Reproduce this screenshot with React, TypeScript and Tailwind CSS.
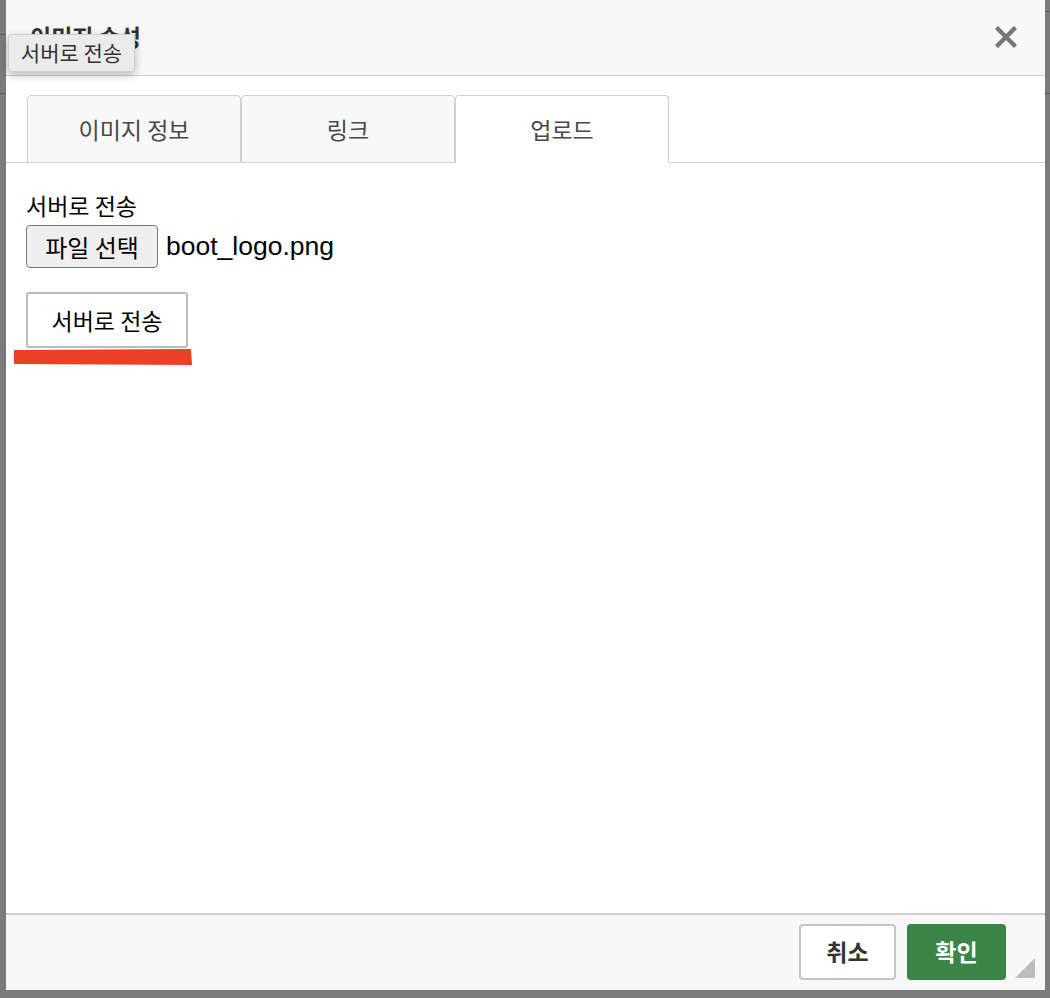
import React from "react";

const KR = { fontFamily: '"Noto Sans CJK KR", "Liberation Sans", sans-serif' };
const MIX = { fontFamily: '"Liberation Sans", "Noto Sans CJK KR", sans-serif' };

function Tab({ label, active }: { label: string; active?: boolean }) {
  return (
    <div
      className={
        "w-[214px] h-[68px] -mb-px flex items-center justify-center rounded-t-[4px] border border-[#d1d1d1] text-[23px] text-[#484848] " +
        (active ? "bg-white border-b-white" : "bg-[#f8f8f8]")
      }
    >
      {label}
    </div>
  );
}

export default function App() {
  return (
    <div className="relative w-[1050px] h-[998px] bg-[#7b7b7b] pl-[6px] pr-[5px] pb-[8px] flex" style={KR}>
      {/* background lines peeking at edges */}
      <div className="absolute left-0 top-[34px] w-[6px] h-px bg-[#5e5e5e]" />
      <div className="absolute left-0 top-[93px] w-[6px] h-px bg-[#5e5e5e]" />
      <div className="absolute right-0 top-[11px] w-[5px] h-px bg-[#5e5e5e]" />
      <div className="absolute right-0 top-[93px] w-[5px] h-px bg-[#5e5e5e]" />

      <div className="relative flex-1 flex flex-col bg-white">
        {/* header */}
        <div className="h-[76px] shrink-0 bg-[#f8f8f8] border-b border-[#d1d1d1] flex items-center justify-between pl-[24px] pr-[28px]">
          <div className="text-[23px] font-bold text-[#333] -mt-[2px]">이미지 속성</div>
          <svg width="22" height="22" viewBox="0 0 22 22" className="mt-[-1px]">
            <path d="M3 3 L19 19 M19 3 L3 19" stroke="#777" strokeWidth="4.4" strokeLinecap="square" />
          </svg>
        </div>

        {/* tabs */}
        <div className="pt-[19px] pl-[21px] flex border-b border-[#d1d1d1]">
          <Tab label="이미지 정보" />
          <Tab label="링크" />
          <Tab label="업로드" active />
        </div>

        {/* body */}
        <div className="flex-1 pl-[20px] pt-[28px]">
          <div className="text-[23px] leading-[28px] text-black">서버로 전송</div>
          <div className="mt-[6px] flex items-center">
            <div className="w-[132px] h-[43px] rounded-[4px] border border-[#767676] bg-[#efefef] flex items-center justify-center text-[24px] text-black">
              파일 선택
            </div>
            <div className="ml-[8px] text-[26.5px] text-black" style={MIX}>
              boot_logo.png
            </div>
          </div>
          <div className="mt-[24px] w-[162px] h-[56px] rounded-[3px] border-2 border-[#bcbcbc] bg-white flex items-center justify-center text-[23px] text-black">
            서버로 전송
          </div>
          <svg width="182" height="18" viewBox="0 0 182 18" className="-ml-[12px] mt-[1px]">
            <polygon points="0,1 177,0 178,16 0,15" fill="#ea4125" />
          </svg>
        </div>

        {/* footer */}
        <div className="h-[77px] shrink-0 bg-[#f8f8f8] border-t-2 border-[#d1d1d1] flex items-center justify-end gap-[11px] pr-[39px] pb-[2px]">
          <div className="w-[97px] h-[56px] rounded-[4px] border-2 border-[#c4c4c4] bg-white flex items-center justify-center text-[23px] font-bold text-[#333]">
            취소
          </div>
          <div className="w-[99px] h-[56px] rounded-[4px] bg-[#3b8446] flex items-center justify-center text-[23px] font-bold text-white">
            확인
          </div>
        </div>
        <svg width="20" height="20" viewBox="0 0 20 20" className="absolute right-[10px] bottom-[12px]">
          <polygon points="20,0 20,20 0,20" fill="#bdbdbd" />
        </svg>

        {/* tooltip */}
        <div className="absolute left-[2px] top-[34px] h-[38px] w-[127px] flex items-center justify-center rounded-[3px] border border-[#cfcfcf] bg-[#ebebeb] text-[21px] text-[#333] shadow-[0_3px_8px_rgba(0,0,0,0.25)]">
          서버로 전송
        </div>
      </div>
    </div>
  );
}
